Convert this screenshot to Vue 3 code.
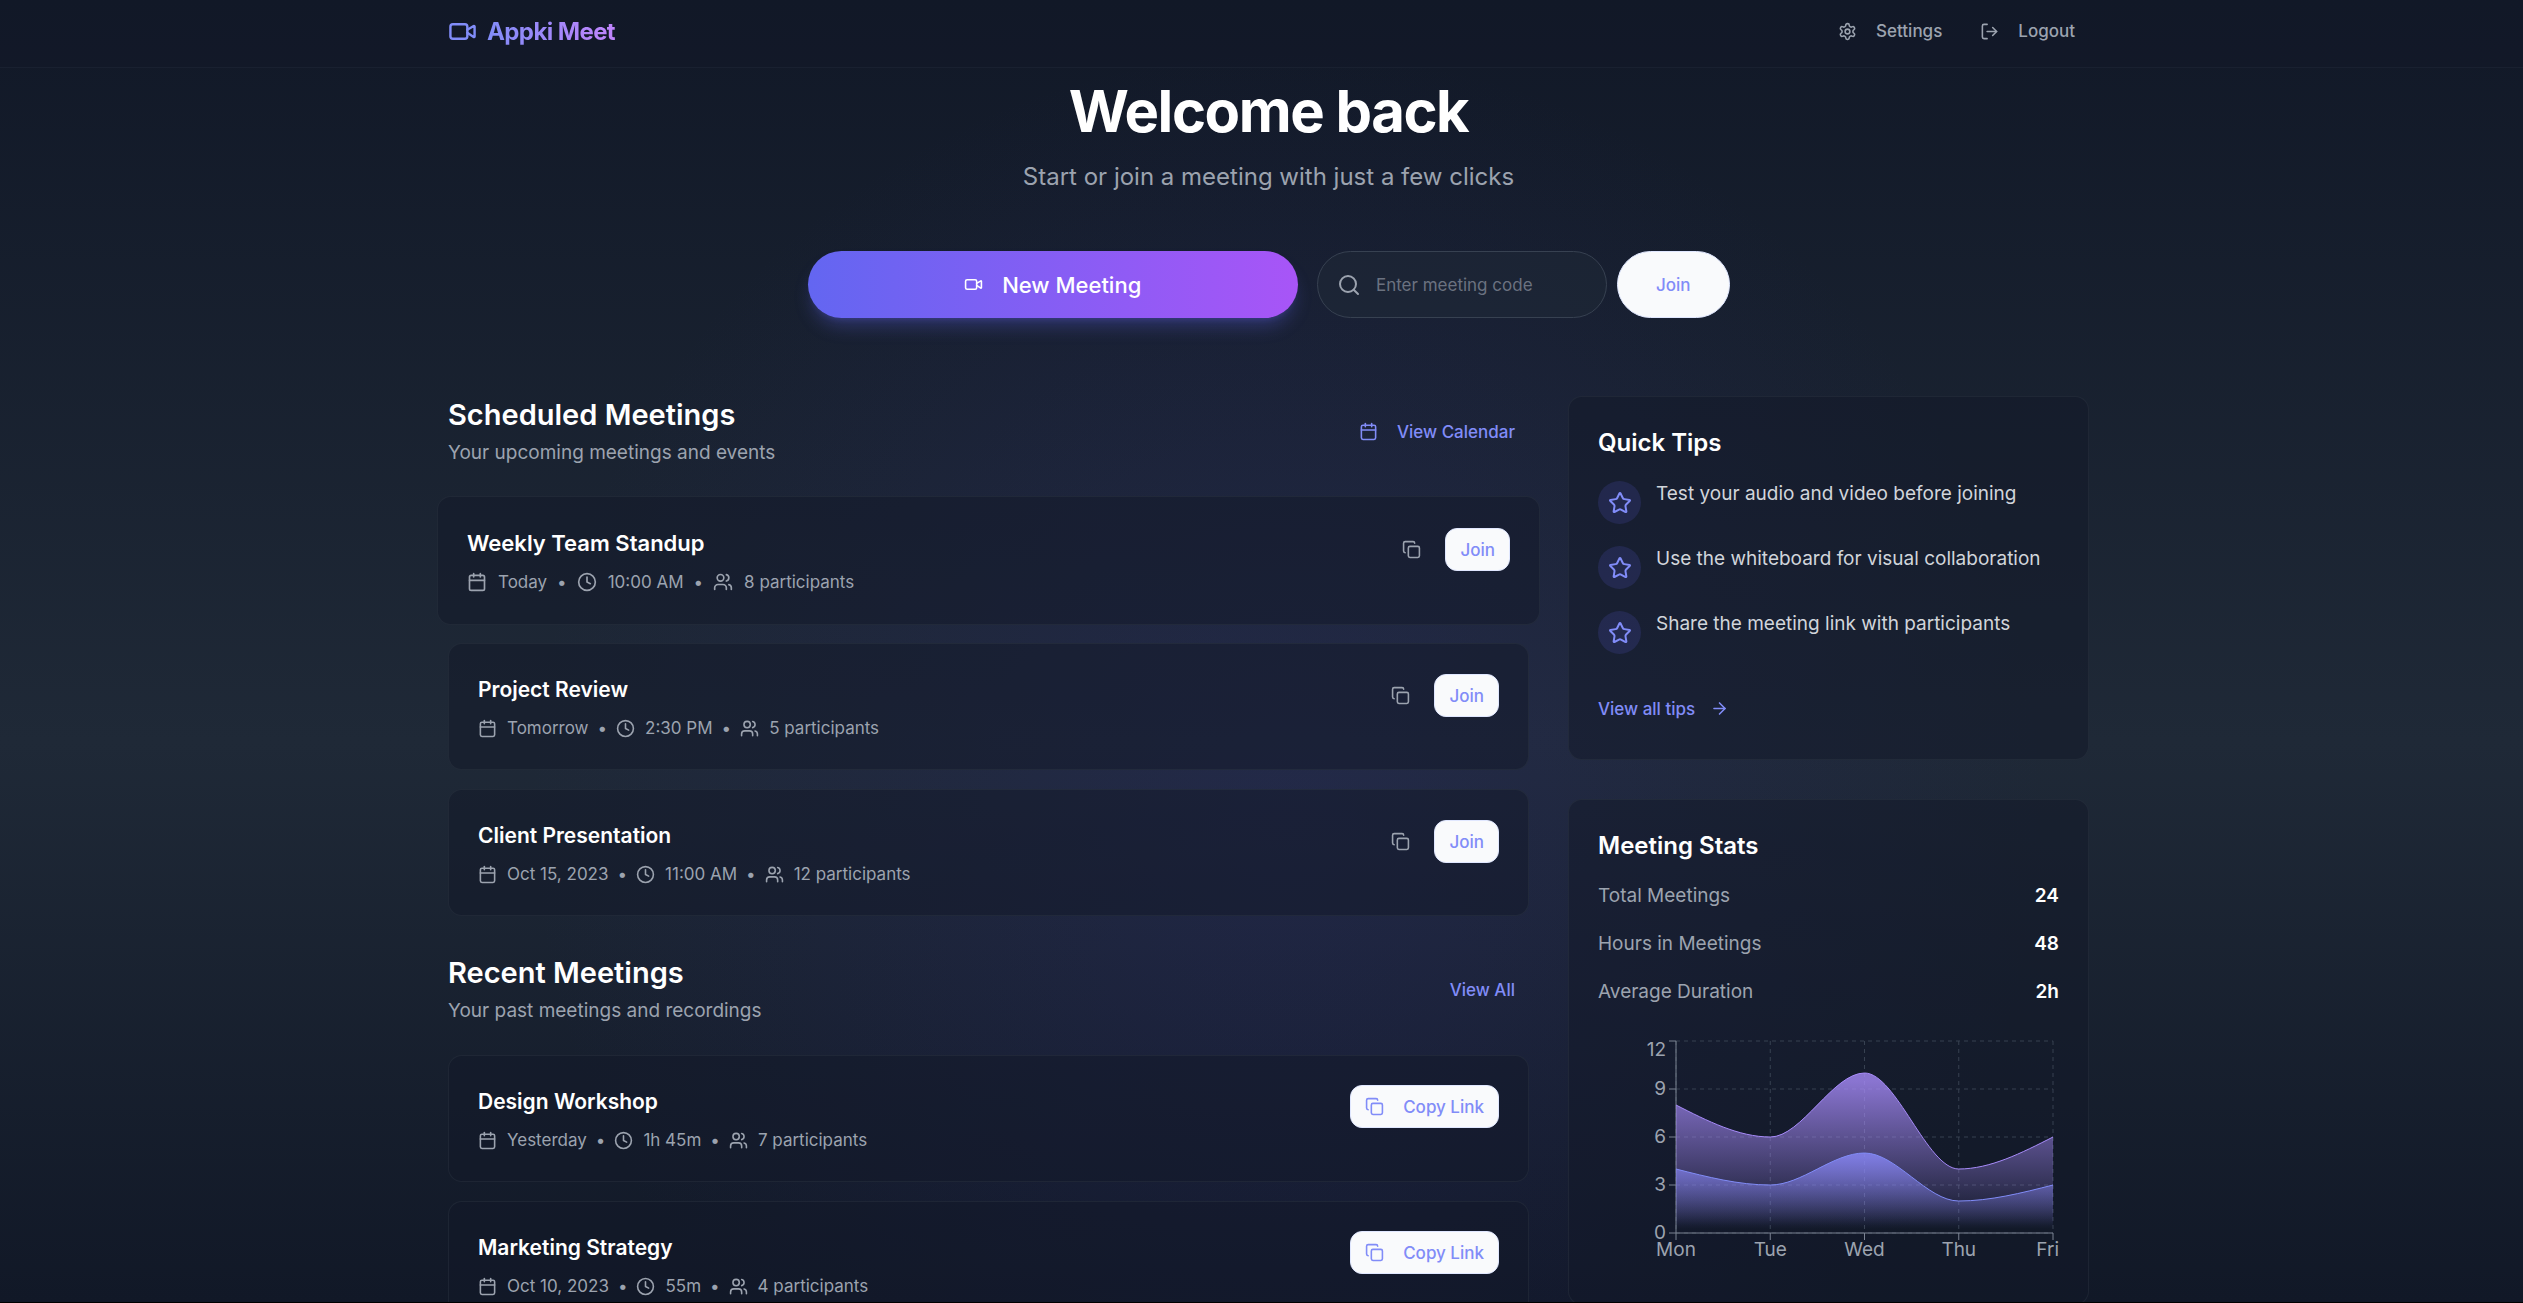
<script setup>
import { h } from 'vue'

const glyphs = {
  video: ['m16 13 5.223 3.482a.5.5 0 0 0 .777-.416V7.87a.5.5 0 0 0-.752-.432L16 10.5', 'M4 6h10a2 2 0 0 1 2 2v8a2 2 0 0 1-2 2H4a2 2 0 0 1-2-2V8a2 2 0 0 1 2-2z'],
  settings: ['M12.22 2h-.44a2 2 0 0 0-2 2v.18a2 2 0 0 1-1 1.73l-.43.25a2 2 0 0 1-2 0l-.15-.08a2 2 0 0 0-2.73.73l-.22.38a2 2 0 0 0 .73 2.73l.15.1a2 2 0 0 1 1 1.72v.51a2 2 0 0 1-1 1.74l-.15.09a2 2 0 0 0-.73 2.73l.22.38a2 2 0 0 0 2.73.73l.15-.08a2 2 0 0 1 2 0l.43.25a2 2 0 0 1 1 1.73V20a2 2 0 0 0 2 2h.44a2 2 0 0 0 2-2v-.18a2 2 0 0 1 1-1.73l.43-.25a2 2 0 0 1 2 0l.15.08a2 2 0 0 0 2.73-.73l.22-.39a2 2 0 0 0-.73-2.73l-.15-.08a2 2 0 0 1-1-1.74v-.5a2 2 0 0 1 1-1.74l.15-.09a2 2 0 0 0 .73-2.73l-.22-.38a2 2 0 0 0-2.73-.73l-.15.08a2 2 0 0 1-2 0l-.43-.25a2 2 0 0 1-1-1.73V4a2 2 0 0 0-2-2z', 'M15 12a3 3 0 1 1-6 0 3 3 0 0 1 6 0z'],
  logout: ['M9 21H5a2 2 0 0 1-2-2V5a2 2 0 0 1 2-2h4', 'm16 17 5-5-5-5', 'M21 12H9'],
  search: ['M19 11a8 8 0 1 1-16 0 8 8 0 0 1 16 0z', 'm21 21-4.3-4.3'],
  calendar: ['M8 2v4', 'M16 2v4', 'M5 4h14a2 2 0 0 1 2 2v14a2 2 0 0 1-2 2H5a2 2 0 0 1-2-2V6a2 2 0 0 1 2-2z', 'M3 10h18'],
  clock: ['M22 12a10 10 0 1 1-20 0 10 10 0 0 1 20 0z', 'M12 6v6l4 2'],
  users: ['M16 21v-2a4 4 0 0 0-4-4H6a4 4 0 0 0-4 4v2', 'M13 7a4 4 0 1 1-8 0 4 4 0 0 1 8 0z', 'M22 21v-2a4 4 0 0 0-3-3.87', 'M16 3.13a4 4 0 0 1 0 7.75'],
  copy: ['M10 8h10a2 2 0 0 1 2 2v10a2 2 0 0 1-2 2H10a2 2 0 0 1-2-2V10a2 2 0 0 1 2-2z', 'M4 16c-1.1 0-2-.9-2-2V4c0-1.1.9-2 2-2h10c1.1 0 2 .9 2 2'],
  star: ['M11.525 2.295a.53.53 0 0 1 .95 0l2.31 4.679a2.123 2.123 0 0 0 1.595 1.16l5.166.756a.53.53 0 0 1 .294.904l-3.736 3.638a2.123 2.123 0 0 0-.611 1.878l.882 5.14a.53.53 0 0 1-.771.56l-4.618-2.428a2.122 2.122 0 0 0-1.973 0L6.396 21.01a.53.53 0 0 1-.77-.56l.881-5.139a2.122 2.122 0 0 0-.611-1.879L2.16 9.795a.53.53 0 0 1 .294-.906l5.165-.755a2.122 2.122 0 0 0 1.597-1.16z'],
  arrow: ['M5 12h14', 'm12 5 7 7-7 7'],
}

const Icon = ({ name, size = 19, weight = 2 }) =>
  h('svg', {
    width: size, height: size, viewBox: '0 0 24 24', fill: 'none', stroke: 'currentColor',
    'stroke-width': weight, 'stroke-linecap': 'round', 'stroke-linejoin': 'round', 'aria-hidden': 'true',
  }, glyphs[name].map((d) => h('path', { d })))
Icon.props = ['name', 'size', 'weight']

const scheduled = [
  { title: 'Weekly Team Standup', date: 'Today', time: '10:00 AM', people: 8, active: true },
  { title: 'Project Review', date: 'Tomorrow', time: '2:30 PM', people: 5 },
  { title: 'Client Presentation', date: 'Oct 15, 2023', time: '11:00 AM', people: 12 },
]
const recent = [
  { title: 'Design Workshop', date: 'Yesterday', time: '1h 45m', people: 7 },
  { title: 'Marketing Strategy', date: 'Oct 10, 2023', time: '55m', people: 4 },
]
const sections = [
  { title: 'Scheduled Meetings', sub: 'Your upcoming meetings and events', link: 'View Calendar', icon: 'calendar', items: scheduled, recent: false },
  { title: 'Recent Meetings', sub: 'Your past meetings and recordings', link: 'View All', items: recent, recent: true },
]
const tips = [
  'Test your audio and video before joining',
  'Use the whiteboard for visual collaboration',
  'Share the meeting link with participants',
]
const stats = [['Total Meetings', '24'], ['Hours in Meetings', '48'], ['Average Duration', '2h']]

const days = ['Mon', 'Tue', 'Wed', 'Thu', 'Fri']
const plot = { left: 78, right: 455, top: 6, bottom: 198 }
const xs = days.map((_, i) => plot.left + (i * (plot.right - plot.left)) / 4)
const yOf = (v) => plot.bottom - v * 16
const levels = [0, 3, 6, 9, 12]

// Monotone cubic interpolation through the daily values.
function curve(values) {
  const ys = values.map(yOf)
  const n = ys.length
  const step = xs[1] - xs[0]
  const slope = ys.slice(1).map((y, i) => (y - ys[i]) / step)
  const t = new Array(n)
  for (let i = 1; i < n - 1; i++) {
    const a = slope[i - 1], b = slope[i]
    t[i] = a * b <= 0 ? 0 : Math.sign(a) * Math.min(Math.abs(a), Math.abs(b), Math.abs(a + b) / 4) * 2
  }
  t[0] = (3 * slope[0] - t[1]) / 2
  t[n - 1] = (3 * slope[n - 2] - t[n - 2]) / 2
  let d = `M${xs[0]},${ys[0]}`
  for (let i = 1; i < n; i++) {
    const k = step / 3
    d += `C${xs[i - 1] + k},${ys[i - 1] + k * t[i - 1]},${xs[i] - k},${ys[i] - k * t[i]},${xs[i]},${ys[i]}`
  }
  return d
}
const area = (d) => `${d}L${plot.right},${plot.bottom}L${plot.left},${plot.bottom}Z`
const hoursLine = curve([8, 6, 10, 4, 6])
const countLine = curve([4, 3, 5, 2, 3])
</script>

<template>
  <div class="page">
    <header class="bar">
      <div class="wrap bar-row">
        <a class="brand" href="#"><Icon name="video" :size="29" /><span>Appki Meet</span></a>
        <nav class="nav">
          <button class="ghost"><Icon name="settings" />Settings</button>
          <button class="ghost"><Icon name="logout" />Logout</button>
        </nav>
      </div>
    </header>

    <main class="main">
      <div class="wrap">
        <section class="hero">
          <h1>Welcome back</h1>
          <p>Start or join a meeting with just a few clicks</p>
          <div class="start">
            <button class="new"><Icon name="video" />New Meeting</button>
            <form class="code" @submit.prevent>
              <label class="field">
                <Icon name="search" :size="24" />
                <input type="text" placeholder="Enter meeting code" aria-label="Meeting code" />
              </label>
              <button class="light pill">Join</button>
            </form>
          </div>
        </section>

        <div class="columns">
          <div class="left">
            <section v-for="s in sections" :key="s.title">
              <div class="head">
                <div>
                  <h2>{{ s.title }}</h2>
                  <p>{{ s.sub }}</p>
                </div>
                <button class="ghost accent"><Icon v-if="s.icon" :name="s.icon" />{{ s.link }}</button>
              </div>
              <div class="list">
                <article v-for="m in s.items" :key="m.title" class="card meeting" :class="{ active: m.active }">
                  <div>
                    <h3>{{ m.title }}</h3>
                    <div class="meta">
                      <Icon name="calendar" :size="m.active ? 20 : 19" /><span>{{ m.date }}</span><span>•</span>
                      <Icon name="clock" :size="m.active ? 20 : 19" /><span>{{ m.time }}</span><span>•</span>
                      <Icon name="users" :size="m.active ? 20 : 19" /><span>{{ m.people }} participants</span>
                    </div>
                  </div>
                  <div v-if="s.recent" class="actions">
                    <button class="light"><Icon name="copy" />Copy Link</button>
                  </div>
                  <div v-else class="actions upcoming">
                    <button class="ghost" aria-label="Copy link"><Icon name="copy" /></button>
                    <button class="light">Join</button>
                  </div>
                </article>
              </div>
            </section>
          </div>

          <aside class="right">
            <section class="card panel">
              <h2>Quick Tips</h2>
              <ul class="tips">
                <li v-for="t in tips" :key="t"><i><Icon name="star" :size="24" /></i><span>{{ t }}</span></li>
              </ul>
              <button class="ghost accent more">View all tips<Icon name="arrow" /></button>
            </section>

            <section class="card panel">
              <h2>Meeting Stats</h2>
              <dl class="stats">
                <div v-for="[k, v] in stats" :key="k"><dt>{{ k }}</dt><dd>{{ v }}</dd></div>
              </dl>
              <svg class="chart" viewBox="0 0 461 240" role="img" aria-label="Meetings per day">
                <defs>
                  <linearGradient id="violet" x1="0" y1="0" x2="0" y2="1">
                    <stop offset="5%" stop-color="#a78bfa" stop-opacity="0.8" />
                    <stop offset="95%" stop-color="#a78bfa" stop-opacity="0" />
                  </linearGradient>
                  <linearGradient id="indigo" x1="0" y1="0" x2="0" y2="1">
                    <stop offset="5%" stop-color="#8988f8" stop-opacity="0.8" />
                    <stop offset="95%" stop-color="#8988f8" stop-opacity="0" />
                  </linearGradient>
                </defs>
                <g class="grid">
                  <line v-for="l in levels" :key="'h' + l" :x1="plot.left" :x2="plot.right" :y1="yOf(l)" :y2="yOf(l)" />
                  <line v-for="x in xs" :key="'v' + x" :x1="x" :x2="x" :y1="plot.top" :y2="plot.bottom" />
                </g>
                <g class="axis">
                  <path :d="`M${plot.left},${plot.top}V${plot.bottom}H${plot.right}`" />
                  <line v-for="l in levels" :key="l" :x1="plot.left - 7" :x2="plot.left" :y1="yOf(l)" :y2="yOf(l)" />
                  <line v-for="x in xs" :key="x" :x1="x" :x2="x" :y1="plot.bottom" :y2="plot.bottom + 7" />
                </g>
                <g class="ticks">
                  <text v-for="l in levels" :key="l" x="68" :y="l === 12 ? 21 : yOf(l) + 6" text-anchor="end">{{ l }}</text>
                  <text v-for="(d, i) in days" :key="d" :x="i === 4 ? 461 : xs[i]" y="221" :text-anchor="i === 4 ? 'end' : 'middle'">{{ d }}</text>
                </g>
                <path :d="area(hoursLine)" fill="url(#violet)" />
                <path :d="hoursLine" fill="none" stroke="#a78bfa" />
                <path :d="area(countLine)" fill="url(#indigo)" />
                <path :d="countLine" fill="none" stroke="#818cf8" />
              </svg>
            </section>
          </aside>
        </div>
      </div>
    </main>
  </div>
</template>

<style>
body {
  margin: 0;
  background: #111827;
}
</style>

<style scoped>
.page {
  box-sizing: border-box;
  height: 100vh;
  overflow: hidden;
  border-bottom: 1px solid #000;
  font-family: Inter, "Liberation Sans", sans-serif;
  font-size: 19px;
  line-height: 29px;
  color: #fff;
  background:
    radial-gradient(circle at 51% 62%, rgba(49, 46, 129, 0.24), rgba(49, 46, 129, 0) 50%),
    linear-gradient(to bottom, #111827, #1f2937 57%, #111827);
}
h1, h2, h3, p, ul, dl, dd { margin: 0; padding: 0; }
svg { flex: none; display: block; }
button {
  display: inline-flex;
  align-items: center;
  justify-content: center;
  gap: 19px;
  box-sizing: border-box;
  height: 43px;
  padding: 0 14px;
  border: 0;
  border-radius: 12px;
  background: none;
  color: #9ca3af;
  font: 500 17px/24px Inter, "Liberation Sans", sans-serif;
  white-space: nowrap;
}
.wrap { max-width: 1641px; margin: 0 auto; }

.bar {
  padding: 0 0 5px 14px;
  background: rgba(17, 24, 39, 0.5);
  border-bottom: 1px solid rgba(55, 65, 81, 0.2);
}
.bar-row { display: flex; align-items: center; justify-content: space-between; height: 62px; }
.brand { display: flex; align-items: center; gap: 10px; color: #818cf8; text-decoration: none; font-size: 24px; font-weight: 700; letter-spacing: -0.025em; }
.brand span { background: linear-gradient(to right, #818cf8, #c084fc); background-clip: text; color: transparent; }
.nav { display: flex; gap: 10px; }

.main { padding-left: 14px; }
.hero { padding: 14px 0 78px; text-align: center; }
.hero h1 { font-size: 58px; line-height: 58px; font-weight: 700; letter-spacing: -0.025em; }
.hero p { margin: 20px 0 57px; font-size: 24px; line-height: 34px; color: #9ca3af; }
.start { display: flex; gap: 19px; max-width: 922px; margin: 0 auto; }
.new {
  flex: 1;
  height: 67px;
  border-radius: 34px;
  background: linear-gradient(to right, #6366f1, #a855f7);
  color: #fff;
  font-size: 22px;
  box-shadow: 0 12px 18px -4px rgba(99, 102, 241, 0.3), 0 5px 7px -5px rgba(99, 102, 241, 0.3);
}
.code { display: flex; gap: 10px; }
.field {
  display: flex;
  align-items: center;
  gap: 15px;
  box-sizing: border-box;
  width: 290px;
  height: 67px;
  padding: 0 19px;
  border: 1px solid #374151;
  border-radius: 34px;
  background: rgba(31, 41, 55, 0.5);
  color: #9ca3af;
}
.field input { flex: 1; min-width: 0; padding: 0; border: 0; outline: 0; background: none; color: #fff; font: 17px/24px Inter, "Liberation Sans", sans-serif; }
.field input::placeholder { color: #6b7280; }
.light { border: 1px solid #e0e7ff; background: #f9fafc; color: #818cf8; }
.pill { height: 67px; padding: 0 38px; border-radius: 34px; }
.accent { color: #818cf8; }

.columns { display: grid; grid-template-columns: 1081fr 521fr; gap: 39px; align-items: start; }
.left { display: grid; gap: 38px; }
.right { display: grid; gap: 39px; }
.head { display: flex; align-items: center; justify-content: space-between; margin-bottom: 30px; }
.head h2 { font-size: 29px; line-height: 37px; font-weight: 600; }
.head p { margin-top: 5px; color: #9ca3af; }
.list { display: flex; flex-direction: column; gap: 19px; }
.card { border: 1px solid rgba(55, 65, 81, 0.3); border-radius: 14px; background: rgba(17, 24, 39, 0.5); padding: 29px; }
.meeting { display: flex; justify-content: space-between; align-items: flex-start; }
.meeting h3 { font-size: 21px; line-height: 33px; font-weight: 600; }
.meta { display: flex; align-items: center; gap: 9px; margin-top: 10px; font-size: 17px; line-height: 24px; color: #9ca3af; }
.meta svg { margin-right: 1px; }
.active { margin: -1px -11px; padding: 30px 29px; }
.active h3 { font-size: 22px; }
.active .meta { gap: 10px; }
.actions { display: flex; gap: 10px; }
.upcoming { padding-top: 1px; }

.panel h2 { font-size: 24px; line-height: 34px; font-weight: 600; }
.tips { display: grid; gap: 20px; margin: 19px 0 33px; list-style: none; }
.tips li { display: flex; gap: 15px; color: #d1d5db; }
.tips i { display: flex; align-items: center; justify-content: center; width: 43px; height: 43px; margin-top: 2px; border-radius: 50%; background: rgba(99, 102, 241, 0.15); color: #818cf8; }
.more { padding: 0; gap: 15px; }
.stats { display: grid; gap: 19px; margin: 18px 0 29px; }
.stats div { display: flex; justify-content: space-between; }
.stats dt { color: #9ca3af; }
.stats dd { font-weight: 600; }
.chart { width: 100%; overflow: visible; }
.grid line { stroke: #374151; stroke-dasharray: 4 4; }
.axis { fill: none; stroke: #7b8392; }
.ticks text { fill: #9ca3af; font-size: 19px; }
</style>
